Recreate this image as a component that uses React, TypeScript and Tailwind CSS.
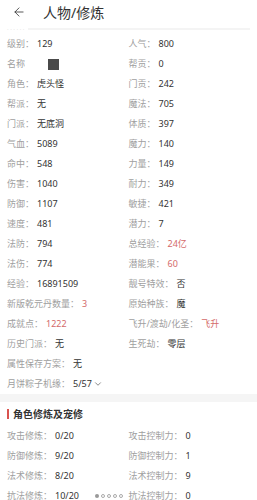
import { ArrowLeft, ChevronDown } from 'lucide-react'

type Cell = { label: string; value?: string; red?: boolean; chevron?: boolean; box?: boolean } | null

const rows: [Cell, Cell][] = [
  [{ label: '级别', value: '129' }, { label: '人气', value: '800' }],
  [{ label: '名称', box: true }, { label: '帮贡', value: '0' }],
  [{ label: '角色', value: '虎头怪' }, { label: '门贡', value: '242' }],
  [{ label: '帮派', value: '无' }, { label: '魔法', value: '705' }],
  [{ label: '门派', value: '无底洞' }, { label: '体质', value: '397' }],
  [{ label: '气血', value: '5089' }, { label: '魔力', value: '140' }],
  [{ label: '命中', value: '548' }, { label: '力量', value: '149' }],
  [{ label: '伤害', value: '1040' }, { label: '耐力', value: '349' }],
  [{ label: '防御', value: '1107' }, { label: '敏捷', value: '421' }],
  [{ label: '速度', value: '481' }, { label: '潜力', value: '7' }],
  [{ label: '法防', value: '794' }, { label: '总经验', value: '24亿', red: true }],
  [{ label: '法伤', value: '774' }, { label: '潜能果', value: '60', red: true }],
  [{ label: '经验', value: '16891509' }, { label: '靓号特效', value: '否' }],
  [{ label: '新版乾元丹数量', value: '3', red: true }, { label: '原始种族', value: '魔' }],
  [{ label: '成就点', value: '1222', red: true }, { label: '飞升/渡劫/化圣', value: '飞升', red: true }],
  [{ label: '历史门派', value: '无' }, { label: '生死劫', value: '零层' }],
  [{ label: '属性保存方案', value: '无' }, null],
  [{ label: '月饼粽子机缘', value: '5/57', chevron: true }, null],
]

const practice: [Cell, Cell][] = [
  [{ label: '攻击修炼', value: '0/20' }, { label: '攻击控制力', value: '0' }],
  [{ label: '防御修炼', value: '9/20' }, { label: '防御控制力', value: '1' }],
  [{ label: '法术修炼', value: '8/20' }, { label: '法术控制力', value: '9' }],
  [{ label: '抗法修炼', value: '10/20' }, { label: '抗法控制力', value: '0' }],
]

function Item({ c }: { c: Cell }) {
  if (!c) return <div className="h-5" />
  return (
    <div className="h-5 flex items-center whitespace-nowrap">
      <span className="text-[#a0a0a0]">{c.box ? c.label : c.label + '：'}</span>
      {c.box && <span className="ml-[23px] w-[11px] h-[11px] bg-[#4a4a4a]" />}
      {c.value && (
        <span className={'ml-[3px] ' + (c.red ? 'text-[#d46a6a]' : 'text-[#333]')}>{c.value}</span>
      )}
      {c.chevron && <ChevronDown size={10} strokeWidth={1.5} className="ml-[1px] text-[#444]" />}
    </div>
  )
}

export default function App() {
  return (
    <main
      className="w-[257px] h-[500px] overflow-hidden bg-white relative text-[9px]"
      style={{ fontFamily: '"Noto Sans", "Noto Sans CJK SC", sans-serif' }}
    >
      {/* Header */}
      <div className="h-6 flex items-center pl-[12px]">
        <ArrowLeft size={14} strokeWidth={1.4} className="text-[#333]" />
        <span className="ml-[17px] text-[14px] text-[#333]">人物/修炼</span>
      </div>

      {/* faded row */}
      <div className="h-[10px] flex items-center px-[7px] gap-[4px] text-[#cfcfcf] text-[6px] leading-none">
        <span>· · · · · ·</span>
        <span className="flex-1 h-[2px] bg-[#f4f4f4]" />
      </div>

      {/* Attributes */}
      <div className="grid grid-cols-2 px-[7px]">
        {rows.map(([a, b], i) => (
          <div key={i} className="contents">
            <Item c={a} />
            <Item c={b} />
          </div>
        ))}
      </div>

      <div className="h-2 bg-[#f5f5f5]" />

      {/* Practice section */}
      <div className="h-6 flex items-center px-[7px]">
        <span className="w-[2px] h-[10px] bg-[#d9534f]" />
        <span className="ml-[4px] text-[10px] font-bold text-[#333]">角色修炼及宠修</span>
      </div>
      <div className="grid grid-cols-2 px-[7px]">
        {practice.map(([a, b], i) => (
          <div key={i} className="contents">
            <Item c={a} />
            <Item c={b} />
          </div>
        ))}
      </div>

      {/* pager dots */}
      <div className="absolute left-[95px] top-[494px] flex gap-[2px]">
        <span className="w-[4px] h-[4px] rounded-full bg-[#999]" />
        <span className="w-[4px] h-[4px] rounded-full border border-[#aaa]" />
        <span className="w-[4px] h-[4px] rounded-full border border-[#aaa]" />
        <span className="w-[4px] h-[4px] rounded-full border border-[#aaa]" />
        <span className="w-[4px] h-[4px] rounded-full border border-[#aaa]" />
      </div>
    </main>
  )
}
